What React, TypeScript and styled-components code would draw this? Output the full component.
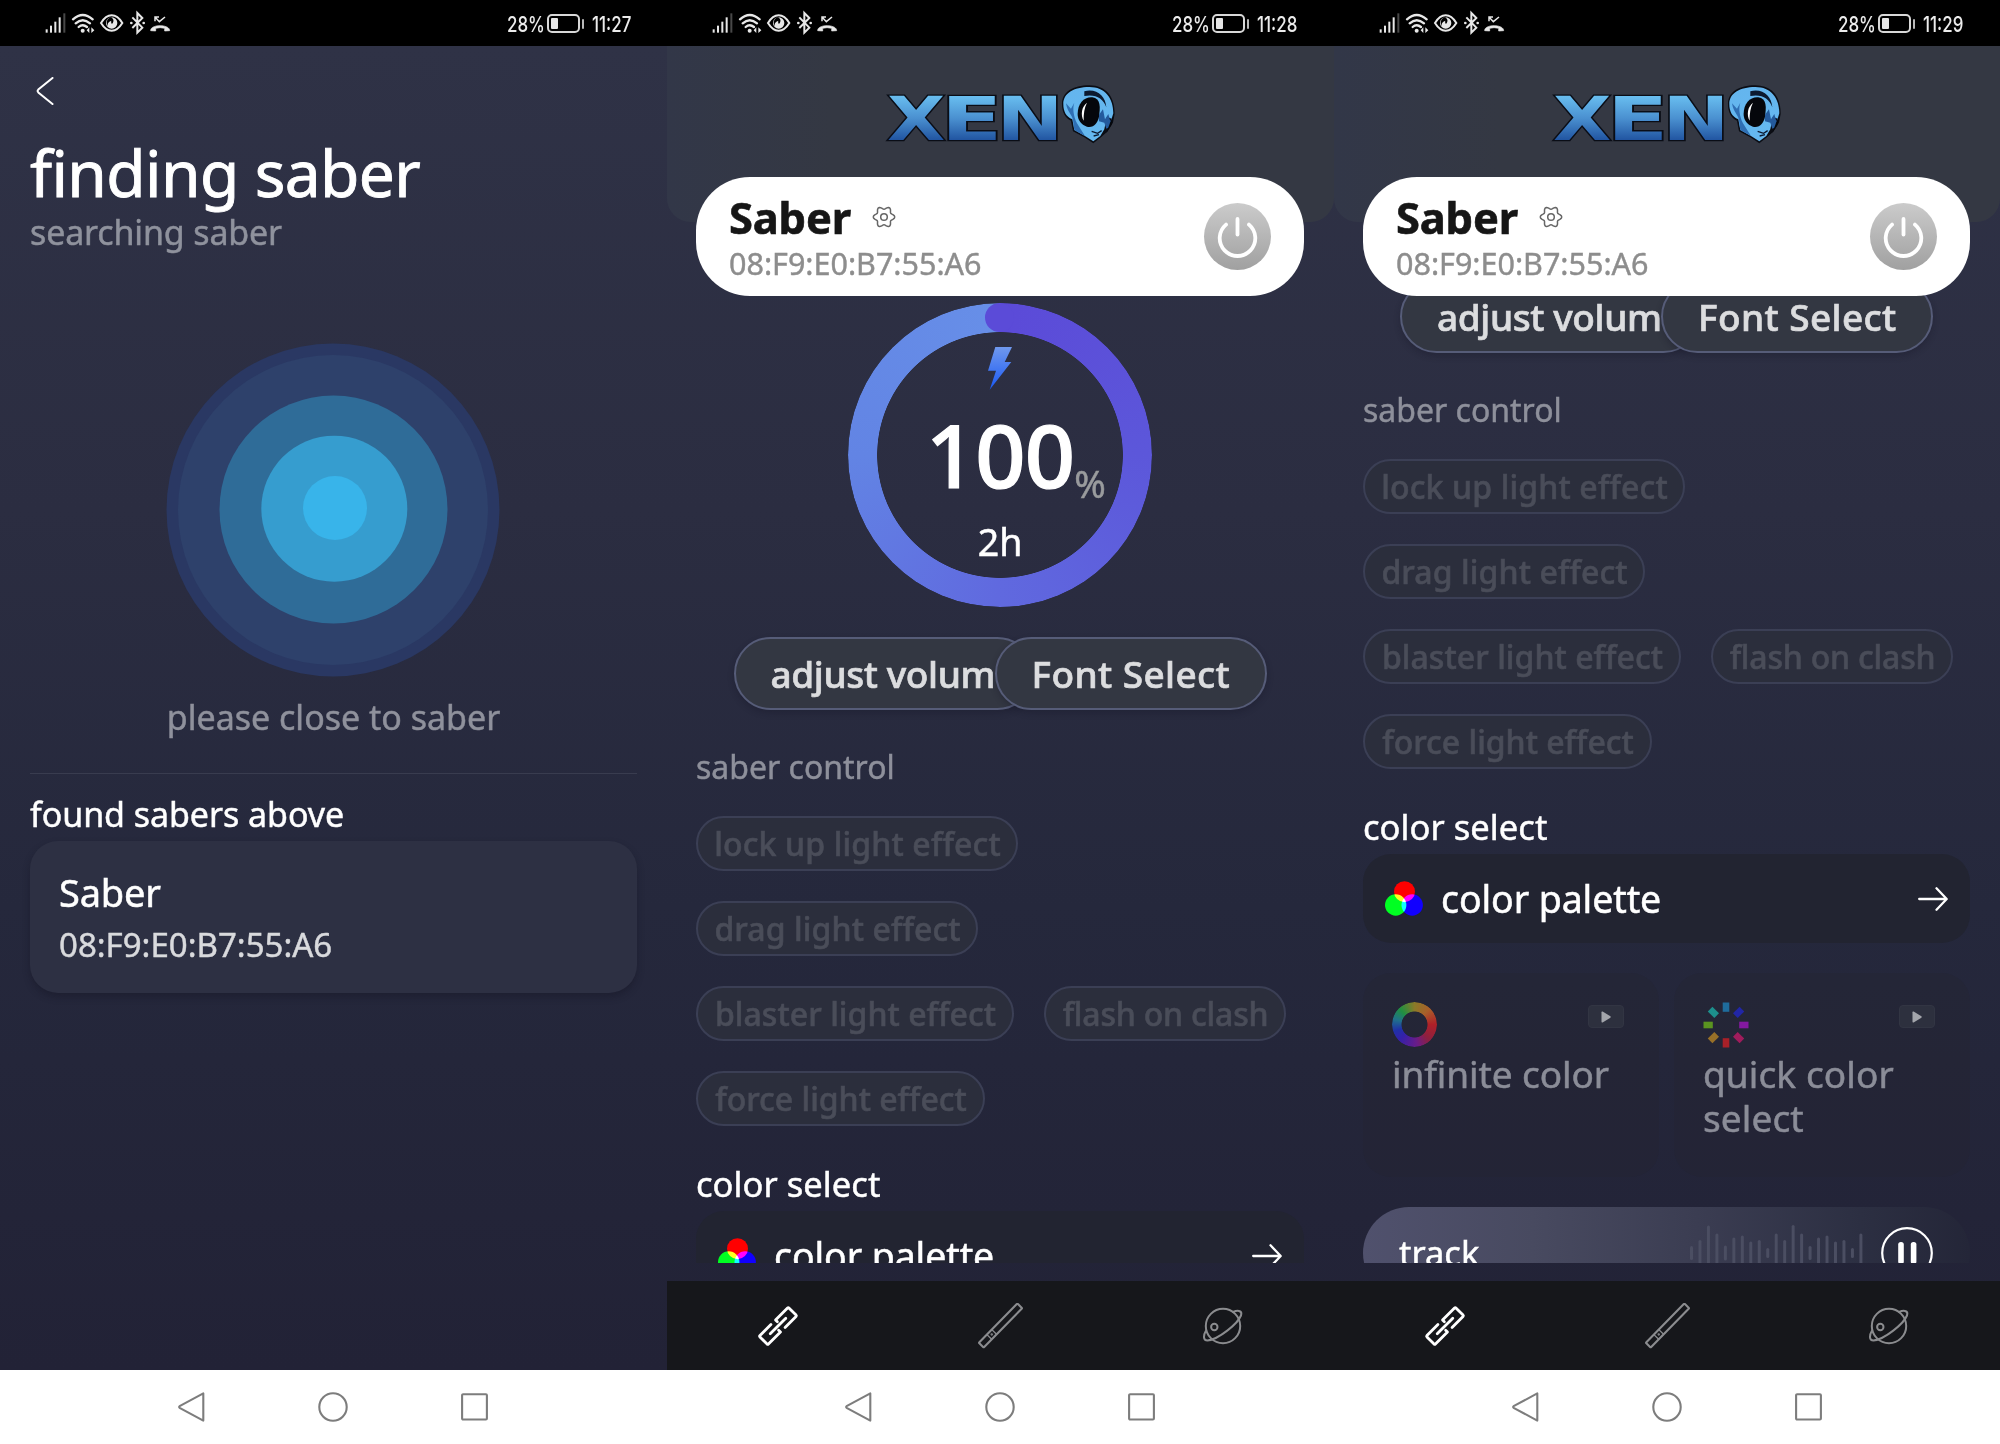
import React from "react";
import styled, { createGlobalStyle } from "styled-components";

const GlobalStyle = createGlobalStyle`
  *, *::before, *::after { box-sizing: border-box; }
  body { margin: 0; background: #fff; }
  svg { display: block; flex: none; }
`;

/* ---------- shell ---------- */

const Board = styled.main`
  display: grid;
  grid-template-columns: 667px 667px 666px;
  width: 2000px;
  height: 1444px;
  overflow: hidden;
  font-family: "Noto Sans", "Open Sans", sans-serif;
  color: #fff;
`;

const Phone = styled.section`
  display: flex;
  flex-direction: column;
  min-width: 0;
  height: 1444px;
  overflow: hidden;
`;

const StatusRow = styled.header`
  display: flex;
  align-items: center;
  flex: none;
  height: 46px;
  padding: 1px 37px 0 40px;
  background: #000;
`;

const StatusText = styled.span<{ $width: number }>`
  width: ${(p) => p.$width}px;
  padding-top: 1px;
  font: 500 22px/26px Inter, sans-serif;
  color: #ececec;
  white-space: nowrap;
  transform: scaleX(0.77);
  transform-origin: left center;
`;

const Spacer = styled.div`
  flex: 1;
`;

const Battery = styled.div`
  display: flex;
  align-items: center;
  gap: 2px;
  margin: 0 8px 0 4px;
`;

const BatteryCell = styled.div`
  width: 33px;
  height: 19px;
  padding: 2px;
  border: 2px solid #d8d8d8;
  border-radius: 5px;
`;

const BatteryLevel = styled.div`
  width: 7px;
  height: 11px;
  border-radius: 1px;
  background: #e6e6e6;
`;

const BatteryNub = styled.div`
  width: 2px;
  height: 10px;
  border-radius: 1px;
  background: #b9b9b9;
`;

const Screen = styled.div`
  display: flex;
  flex-direction: column;
  flex: 1;
  min-height: 0;
  background: linear-gradient(#2f3246 0%, #2b2d41 35%, #25283c 65%, #222236 100%);
`;

const SystemBar = styled.footer`
  display: flex;
  align-items: center;
  justify-content: center;
  gap: 113px;
  flex: none;
  height: 74px;
  padding-right: 2px;
  background: #fff;
`;

/* ---------- text ---------- */

const Text = styled.div<{
  $size: number;
  $line?: number;
  $weight?: number;
  $color?: string;
  $track?: number;
  $top?: number;
}>`
  margin: ${(p) => p.$top ?? 0}px 0 0;
  font-size: ${(p) => p.$size}px;
  line-height: ${(p) => p.$line ?? 44}px;
  font-weight: ${(p) => p.$weight ?? 400};
  color: ${(p) => p.$color ?? "#fff"};
  letter-spacing: ${(p) => p.$track ?? 0}px;
  -webkit-text-stroke: 0.014em currentColor;
`;

/* ---------- search screen ---------- */

const SearchBody = styled(Screen)`
  padding: 31px 30px 0;
`;

const RadarBlock = styled.div`
  display: flex;
  flex-direction: column;
  align-items: center;
  margin-top: 90px;
`;

const Divider = styled.div`
  flex: none;
  height: 1px;
  margin-top: 34px;
  background: #393c4f;
`;

const DeviceCard = styled.div`
  height: 152px;
  margin-top: 5px;
  padding: 26px 29px;
  border-radius: 28px;
  background: #2d3043;
  box-shadow: 0 4px 7px rgba(20, 20, 35, 0.4);
`;

/* ---------- control screen ---------- */

const LogoBand = styled.div`
  display: flex;
  justify-content: center;
  flex: none;
  height: 176px;
  padding-top: 36px;
  border-radius: 0 0 24px 24px;
  background: linear-gradient(90deg, #323748, #343843 25%, #343843);
`;

const SaberCard = styled.div`
  position: relative;
  z-index: 1;
  display: flex;
  align-items: center;
  justify-content: space-between;
  flex: none;
  height: 119px;
  margin: -45px 30px 0 29px;
  padding: 2px 33px 0 33px;
  border-radius: 54px;
  background: #fff;
`;

const SaberName = styled.div`
  display: flex;
  align-items: center;
  gap: 21px;
`;

const PowerButton = styled.button`
  width: 67px;
  height: 67px;
  margin-top: -2px;
  padding: 0;
  border: 0;
  border-radius: 50%;
  background: linear-gradient(#cbcbcb, #a0a0a0);
`;

const Viewport = styled.div`
  flex: none;
  height: 987px;
  margin-top: -20px;
  padding: 0 30px 0 29px;
  overflow: hidden;
`;

const Scroller = styled.div<{ $scroll: number }>`
  display: flex;
  flex-direction: column;
  padding-top: 27px;
  margin-top: ${(p) => -p.$scroll}px;
`;

const Gauge = styled.div`
  position: relative;
  display: flex;
  flex-direction: column;
  align-items: center;
  align-self: center;
  width: 304px;
  height: 304px;
  padding-top: 44px;
`;

const GaugeRing = styled.div`
  position: absolute;
  inset: 0;
  border-radius: 50%;
  background: conic-gradient(#5b4ad8, #5c57da 25%, #6069df 50%, #6284e4 75%, #678fe8);
  mask: radial-gradient(circle, transparent 122.5px, #000 123.2px);

  &::after {
    content: "";
    position: absolute;
    top: 0;
    left: 137px;
    width: 29px;
    height: 29px;
    border-radius: 50%;
    background: #5b4bd8;
  }
`;

const ChargeRow = styled.div`
  display: flex;
  align-items: flex-end;
  margin-top: 14px;
`;

const Percent = styled.span`
  width: 0;
  margin-bottom: -1px;
  font-size: 38px;
  line-height: 44px;
  color: #999b9d;
  -webkit-text-stroke: 0.5px currentColor;
`;

const PillRow = styled.div`
  display: flex;
  align-self: center;
  margin-top: 30px;
`;

const Pill = styled.button<{ $width: number; $track: number }>`
  width: ${(p) => p.$width}px;
  height: 73px;
  padding: 0 0 0 35px;
  border: 2px solid #565c78;
  border-radius: 37px;
  background: #333742;
  font: 500 37px/44px "Noto Sans", "Open Sans", sans-serif;
  letter-spacing: ${(p) => p.$track}px;
  text-align: left;
  white-space: nowrap;
  color: #dcdddf;
  -webkit-text-stroke: 0.018em currentColor;
  box-shadow: 0 3px 6px rgba(20, 20, 35, 0.3);

  & + & {
    position: relative;
    margin-left: -39px;
  }
`;

const ChipRow = styled.div`
  display: flex;
  flex-wrap: wrap;
  gap: 30px;
  margin-top: 27px;
`;

const Chip = styled.button<{ $width: number; $track: number }>`
  width: ${(p) => p.$width}px;
  height: 55px;
  padding: 0 0 0 1px;
  border: 2px solid #3b3f55;
  border-radius: 28px;
  background: #2b2e3c;
  font: 500 32px/44px "Noto Sans", "Open Sans", sans-serif;
  letter-spacing: ${(p) => p.$track}px;
  white-space: nowrap;
  color: #4a4d59;
  -webkit-text-stroke: 0.018em currentColor;
`;

const PaletteRow = styled.div`
  display: flex;
  align-items: center;
  flex: none;
  gap: 18px;
  height: 89px;
  margin-top: 5px;
  padding: 0 22px 0 22px;
  border-radius: 28px;
  background: #222431;
`;

const ModeGrid = styled.div`
  display: grid;
  grid-template-columns: 1fr 1fr;
  gap: 15px;
  margin-top: 30px;
`;

const ModeCard = styled.div`
  height: 204px;
  padding: 29px 35px 0 29px;
  border-radius: 28px;
  background: rgba(35, 37, 48, 0.28);
`;

const ModeHead = styled.div`
  display: flex;
  justify-content: space-between;
  height: 45px;
`;

const PlayBadge = styled.div`
  display: flex;
  align-items: center;
  justify-content: center;
  width: 36px;
  height: 23px;
  margin-top: 3px;
  border: 1px solid #323543;
  border-radius: 4px;
  background: #2d303e;
`;

const TrackBar = styled.div`
  display: flex;
  align-items: center;
  flex: none;
  height: 92px;
  margin-top: 30px;
  padding: 0 37px 0 36px;
  border-radius: 46px;
  background: linear-gradient(90deg, #50516d, #484a60 28%, #3b3d52 55%, #2c2f42 82%, #242638);
`;

const TabBar = styled.nav`
  display: grid;
  grid-template-columns: repeat(3, 1fr);
  align-items: center;
  justify-items: center;
  flex: none;
  height: 89px;
  margin-top: 18px;
  background: #16171b;
`;

/* ---------- icons ---------- */

const StatusIcons = () => (
  <svg width="140" height="40" viewBox="0 0 420 120" fill="none" stroke="#e8e8e8">
    <g stroke="none" fill="#e8e8e8">
      <rect x="17" y="76" width="6" height="10" />
      <rect x="30" y="65" width="6" height="21" />
      <rect x="43" y="53" width="6" height="33" />
      <rect x="56" y="40" width="6" height="46" />
      <rect x="70" y="28" width="6" height="58" fill="#484848" />
    </g>
    <g strokeWidth="7" strokeLinecap="round">
      <path d="M99 46Q128 20 158 46" />
      <path d="M107 58Q128 39 150 58" />
      <path d="M116 69Q128 58 141 69" />
    </g>
    <circle cx="128" cy="80" r="6" fill="#e8e8e8" stroke="none" />
    <path d="M148 70v17l-8-8zM154 70v17l9-8z" fill="#e8e8e8" stroke="none" />
    <path d="M183 57Q197 34 215 34Q233 34 247 57Q233 80 215 80Q197 80 183 57Z" strokeWidth="6" />
    <circle cx="215" cy="57" r="17" fill="#e8e8e8" stroke="none" />
    <path d="M213 39C224 47 221 54 216 60C213 56 213 53 214 50C205 53 201 59 204 67C197 56 200 44 213 39Z" fill="#000" stroke="none" />
    <path d="M277 40L307 71L292 86V27L307 42L277 72" strokeWidth="6" />
    <circle cx="274" cy="57" r="4" fill="#e8e8e8" stroke="none" />
    <circle cx="311" cy="57" r="4" fill="#e8e8e8" stroke="none" />
    <path d="M332 80C331 60 389 60 389 80L374 81V73Q360 69 347 73V81Z" fill="#e8e8e8" strokeWidth="2" strokeLinejoin="round" />
    <path d="M345 52V39H357M345 39L358 53L375 39" strokeWidth="4.5" />
  </svg>
);

const BackIcon = () => (
  <svg width="30" height="28" viewBox="0 0 30 28" fill="none" stroke="#fff" strokeWidth="2" strokeLinecap="round">
    <path d="M22.5 1L8.3 12.6Q6.9 14 8.3 15.4L22.5 27" />
  </svg>
);

const Radar = () => (
  <svg width="335" height="334" viewBox="0 0 335 334">
    <circle cx="167" cy="167" r="166.5" fill="#2a3863" />
    <circle cx="167" cy="167" r="155" fill="#2e416b" />
    <circle cx="167.5" cy="166.5" r="114" fill="#2f6c98" />
    <circle cx="168.3" cy="165.7" r="73" fill="#369dcf" />
    <circle cx="169" cy="165" r="32" fill="#38b4ea" />
  </svg>
);

const XenoLogo = () => (
  <svg width="240" height="66" viewBox="0 0 240 66">
    <defs>
      <linearGradient id="xenoFill" x1="0" y1="0" x2="0" y2="1">
        <stop offset="0.15" stopColor="#6cc3f3" />
        <stop offset="0.5" stopColor="#4a90d0" />
        <stop offset="0.82" stopColor="#1f529f" />
      </linearGradient>
      <linearGradient id="headFill" x1="0" y1="0" x2="0" y2="1">
        <stop offset="0" stopColor="#64b5ee" />
        <stop offset="1" stopColor="#65b9f0" />
      </linearGradient>
    </defs>
    <g
      fontFamily='"DejaVu Sans", sans-serif'
      fontWeight="700"
      fontSize="61"
      fill="url(#xenoFill)"
      stroke="#0a0d16"
      strokeWidth="2.6"
      paintOrder="stroke"
    >
      <text transform="translate(6 57.5) scale(1.24 1)">X</text>
      <text transform="translate(60 57.5) scale(1.47 1)">E</text>
      <text transform="translate(115.5 57.5) scale(1.31 1)">N</text>
    </g>
    <g transform="translate(-10 -12) scale(.3333)">
      <path d="M573 102C573 66 606 46 655 46C706 46 732 82 731 132L726 158L708 186L690 202L667 220L640 202L606 184L600 152C582 144 573 126 573 102Z" fill="#0b0d14" />
      <path d="M577 102C577 70 608 51 655 51C702 51 727 84 727 130L722 146L708 140L700 178L688 198L667 214L642 198L610 180L604 148C585 140 577 124 577 102Z" fill="url(#headFill)" />
      <path d="M640 64C676 54 704 78 706 112C696 84 674 72 640 78Z" fill="#0c1a30" />
      <path d="M585 100C590 128 602 132 606 150L610 180L642 198L618 160C608 138 604 116 610 98L600 116Z" fill="#2f6fb4" />
      <path d="M620 132C620 100 640 80 664 82C690 86 688 112 684 140C680 160 668 174 648 170C630 164 620 150 620 132Z" fill="#05070c" />
      <path d="M684 134L696 118L702 148L712 132L718 154L724 140L716 172L706 176L700 158L684 154Z" fill="#245a9c" />
      <path d="M727 140L718 156L706 190L722 164Z" fill="#05070c" />
      <path d="M648 98C632 110 628 134 638 152C638 130 640 114 648 98Z" fill="#fff" />
      <path d="M662 184L680 190L692 182M668 198L684 194" fill="none" stroke="#0c1a30" strokeWidth="4" />
    </g>
  </svg>
);

const gearPath = (() => {
  const points: string[] = [];
  for (let deg = 0; deg < 360; deg += 5) {
    const a = (deg * Math.PI) / 180;
    const r = 9.2 + 1.5 * Math.cos(6 * a);
    points.push(`${(12 + r * Math.cos(a)).toFixed(2)} ${(12 + r * Math.sin(a)).toFixed(2)}`);
  }
  return `M${points.join("L")}Z`;
})();

const GearIcon = () => (
  <svg width="24" height="24" viewBox="0 0 24 24" fill="none" stroke="#666" strokeWidth="1.5" strokeLinejoin="round">
    <path d={gearPath} />
    <circle cx="12" cy="12" r="3.3" />
  </svg>
);

const PowerIcon = () => (
  <svg width="67" height="67" viewBox="0 0 67 67" fill="none" stroke="#fff" strokeWidth="3.8" strokeLinecap="round">
    <path d="M22 21.6A17.8 17.8 0 1 0 45 21.6" />
    <path d="M33.5 16V31.5" />
  </svg>
);

const BoltIcon = () => (
  <svg width="24" height="43" viewBox="0 0 24 43">
    <defs>
      <linearGradient id="boltFill" x1="0" y1="0" x2="0" y2="1">
        <stop offset="0" stopColor="#7099ee" />
        <stop offset="1" stopColor="#1a59f4" />
      </linearGradient>
    </defs>
    <path d="M7.3 0H24L16.7 15H23.3L1.7 42.7L8 23.7H0Z" fill="url(#boltFill)" />
  </svg>
);

const Isolated = styled.g`
  isolation: isolate;
  circle {
    mix-blend-mode: screen;
  }
`;

const RgbIcon = () => (
  <svg width="38" height="35" viewBox="0 0 38 35">
    <Isolated>
      <circle cx="19.5" cy="10.7" r="10.5" fill="#f00" />
      <circle cx="10.7" cy="24" r="10.7" fill="#0f2" />
      <circle cx="27.2" cy="24" r="10.7" fill="#10f" />
    </Isolated>
  </svg>
);

const ArrowIcon = () => (
  <svg width="30" height="24" viewBox="0 0 30 24" fill="none" stroke="#fff" strokeWidth="2.3" strokeLinecap="round" strokeLinejoin="round">
    <path d="M1.2 12H28.5M18.5 1.3L28.7 12L18.5 22.7" />
  </svg>
);

const HueRing = styled.div`
  width: 45px;
  height: 45px;
  border-radius: 50%;
  background: conic-gradient(#8a7a28, #a8602a 12%, #b02028 25%, #8c2040 38%, #6a1c88 48%, #3520a8 62%, #2030a8 70%, #20708c 79%, #209040 88%, #8a7a28);
  mask: radial-gradient(circle, transparent 12.6px, #000 13.4px);
`;

const wheelColors = ["#1f6c9c", "#2126a6", "#8419a0", "#a01c5c", "#a82028", "#987028", "#5a9420", "#1d8f8c"];

const WheelIcon = () => (
  <svg width="46" height="46" viewBox="-23 -23 46 46">
    {wheelColors.map((fill, i) => (
      <rect key={fill} x="-3.3" y="-22.5" width="6.6" height="9.3" fill={fill} transform={`rotate(${i * 45})`} />
    ))}
  </svg>
);

const PlayGlyph = () => (
  <svg width="10" height="12" viewBox="0 0 10 12">
    <path d="M0.5 1.2Q0.5 0 1.6 .6L9.4 5.3Q10 6 9.4 6.7L1.6 11.4Q.5 12 .5 10.8Z" fill="#a3a5ab" />
  </svg>
);

const waveHeights = [14, 26, 55, 39, 15, 31, 35, 23, 26, 10, 39, 26, 56, 39, 14, 31, 35, 23, 26, 10, 39];

const Wave = styled.svg`
  margin-right: 18px;
`;

const WaveForm = () => (
  <Wave width="173" height="60" viewBox="0 0 173 60" fill="#4b4e62">
    {waveHeights.map((h, i) => (
      <rect key={i} x={i * 8.47} y={30 - h / 2} width="3" height={h} rx="1.5" />
    ))}
  </Wave>
);

const PauseIcon = () => (
  <svg width="52" height="52" viewBox="0 0 52 52">
    <circle cx="26" cy="26" r="24.8" fill="none" stroke="#fff" strokeWidth="2.2" />
    <rect x="17.2" y="15" width="5.6" height="22" rx="2.6" fill="#fff" />
    <rect x="29.8" y="15" width="5.6" height="22" rx="2.6" fill="#fff" />
  </svg>
);

const LinkIcon = () => (
  <svg width="44" height="44" viewBox="-22 -22 44 44" fill="none" stroke="#fff" strokeWidth="2.8" strokeLinejoin="round" strokeLinecap="round">
    <g transform="rotate(-45)">
      <path d="M-4 -6H-19.5Q-20.5 -6 -20.5 -5V5Q-20.5 6 -19.5 6H-2.5V3.4" />
      <path d="M4 6H19.5Q20.5 6 20.5 5V-5Q20.5 -6 19.5 -6H2.5V-3.4" />
      <path d="M-11 0H11" />
    </g>
  </svg>
);

const BladeIcon = () => (
  <svg width="46" height="46" viewBox="-23.5 -22.5 46 46" fill="none" stroke="#8b8c8f" strokeWidth="2.1" strokeLinejoin="round">
    <g transform="rotate(-45.5)">
      <rect x="-27.5" y="-3.4" width="55" height="6.8" rx="0.8" />
      <path d="M-9 -3.3V3.3M-16 -3.3V3.3" strokeWidth="1.3" />
      <circle cx="-12.5" cy="0" r="0.7" strokeWidth="1" />
    </g>
  </svg>
);

const PlanetIcon = () => (
  <svg width="44" height="44" viewBox="0 0 44 44" fill="none" stroke="#8b8c8f" strokeWidth="2" strokeLinecap="round">
    <circle cx="22" cy="22" r="17.2" />
    <circle cx="13.3" cy="23" r="3.2" />
    <path d="M4.8 27C2.3 31 1.8 36.5 6.5 36.6C18 35 36.5 20 40 11.5C41.4 7.2 38 5.6 32 8" />
  </svg>
);

const SystemNav = () => (
  <SystemBar>
    <svg width="28" height="30" viewBox="-1 0 28 30" fill="none" stroke="#7d7d7d" strokeWidth="2.1" strokeLinejoin="round">
      <path d="M25.3 1.4V28.6L1.6 15.8Q.8 15 1.6 14.2Z" />
    </svg>
    <svg width="30" height="30" viewBox="0 0 30 30" fill="none" stroke="#7d7d7d" strokeWidth="2.1">
      <circle cx="15" cy="15" r="13.7" />
    </svg>
    <svg width="27" height="28" viewBox="0 0 27 28" fill="none" stroke="#7d7d7d" strokeWidth="2.1">
      <rect x="1.1" y="1.3" width="24.8" height="25.2" rx="1" />
    </svg>
  </SystemBar>
);

/* ---------- composed parts ---------- */

const StatusBar = ({ time, timeWidth }: { time: string; timeWidth: number }) => (
  <StatusRow>
    <StatusIcons />
    <Spacer />
    <StatusText $width={36}>28%</StatusText>
    <Battery>
      <BatteryCell>
        <BatteryLevel />
      </BatteryCell>
      <BatteryNub />
    </Battery>
    <StatusText $width={timeWidth}>{time}</StatusText>
  </StatusRow>
);

const SearchPhone = () => (
  <Phone>
    <StatusBar time="11:27" timeWidth={38} />
    <SearchBody>
      <BackIcon />
      <Text as="h1" $size={64} $line={76} $track={-0.6} $top={30}>
        finding saber
      </Text>
      <Text $size={34} $line={42} $color="#8f929d" $track={-0.15}>
        searching saber
      </Text>
      <RadarBlock>
        <Radar />
        <Text $size={34} $top={18} $color="#8f919c">
          please close to saber
        </Text>
      </RadarBlock>
      <Divider />
      <Text $size={34} $top={18} $track={-0.05}>
        found sabers above
      </Text>
      <DeviceCard>
        <Text $size={38} $line={50} $track={-0.2}>
          Saber
        </Text>
        <Text $size={33} $top={6} $color="#d9dadd">
          08:F9:E0:B7:55:A6
        </Text>
      </DeviceCard>
    </SearchBody>
    <SystemNav />
  </Phone>
);

const chips = [
  { label: "lock up light effect", width: 322, track: 0.15 },
  { label: "drag light effect", width: 282, track: 0.1 },
  { label: "blaster light effect", width: 318, track: 0.05 },
  { label: "flash on clash", width: 242, track: -0.2 },
  { label: "force light effect", width: 289, track: 0 },
];

const ControlPhone = ({ time, scroll }: { time: string; scroll: number }) => (
  <Phone>
    <StatusBar time={time} timeWidth={40} />
    <Screen>
      <LogoBand>
        <XenoLogo />
      </LogoBand>
      <SaberCard>
        <div>
          <SaberName>
            <Text $size={43.5} $line={50} $weight={700} $color="#161616" $track={-0.2}>
              Saber
            </Text>
            <GearIcon />
          </SaberName>
          <Text $size={30.5} $line={42} $color="#8d8d8d">
            08:F9:E0:B7:55:A6
          </Text>
        </div>
        <PowerButton>
          <PowerIcon />
        </PowerButton>
      </SaberCard>
      <Viewport>
        <Scroller $scroll={scroll}>
          <Gauge>
            <GaugeRing />
            <BoltIcon />
            <ChargeRow>
              <Text $size={88} $line={100} $weight={500} $track={-0.8}>
                100
              </Text>
              <Percent>%</Percent>
            </ChargeRow>
            <Text $size={37.5} $top={16}>
              2h
            </Text>
          </Gauge>
          <PillRow>
            <Pill $width={300} $track={-0.4}>
              adjust volum
            </Pill>
            <Pill $width={272} $track={0.4}>
              Font Select
            </Pill>
          </PillRow>
          <Text $size={32} $top={35} $color="#8e909b">
            saber control
          </Text>
          <ChipRow>
            {chips.map((c) => (
              <Chip key={c.label} $width={c.width} $track={c.track}>
                {c.label}
              </Chip>
            ))}
          </ChipRow>
          <Text $size={34.5} $top={36} $track={0.05}>
            color select
          </Text>
          <PaletteRow>
            <RgbIcon />
            <Text $size={37.5} $top={1} $track={-0.1}>
              color palette
            </Text>
            <Spacer />
            <ArrowIcon />
          </PaletteRow>
          <ModeGrid>
            <ModeCard>
              <ModeHead>
                <HueRing />
                <PlayBadge>
                  <PlayGlyph />
                </PlayBadge>
              </ModeHead>
              <Text $size={37} $top={5} $color="#8b8d98" $track={-0.1}>
                infinite color
              </Text>
            </ModeCard>
            <ModeCard>
              <ModeHead>
                <WheelIcon />
                <PlayBadge>
                  <PlayGlyph />
                </PlayBadge>
              </ModeHead>
              <Text $size={37} $top={5} $color="#8b8d98" $track={0.1}>
                quick color select
              </Text>
            </ModeCard>
          </ModeGrid>
          <TrackBar>
            <Text $size={34.5}>track</Text>
            <Spacer />
            <WaveForm />
            <PauseIcon />
          </TrackBar>
        </Scroller>
      </Viewport>
      <TabBar>
        <LinkIcon />
        <BladeIcon />
        <PlanetIcon />
      </TabBar>
    </Screen>
    <SystemNav />
  </Phone>
);

export default function App() {
  return (
    <>
      <GlobalStyle />
      <Board>
        <SearchPhone />
        <ControlPhone time="11:28" scroll={0} />
        <ControlPhone time="11:29" scroll={357} />
      </Board>
    </>
  );
}
